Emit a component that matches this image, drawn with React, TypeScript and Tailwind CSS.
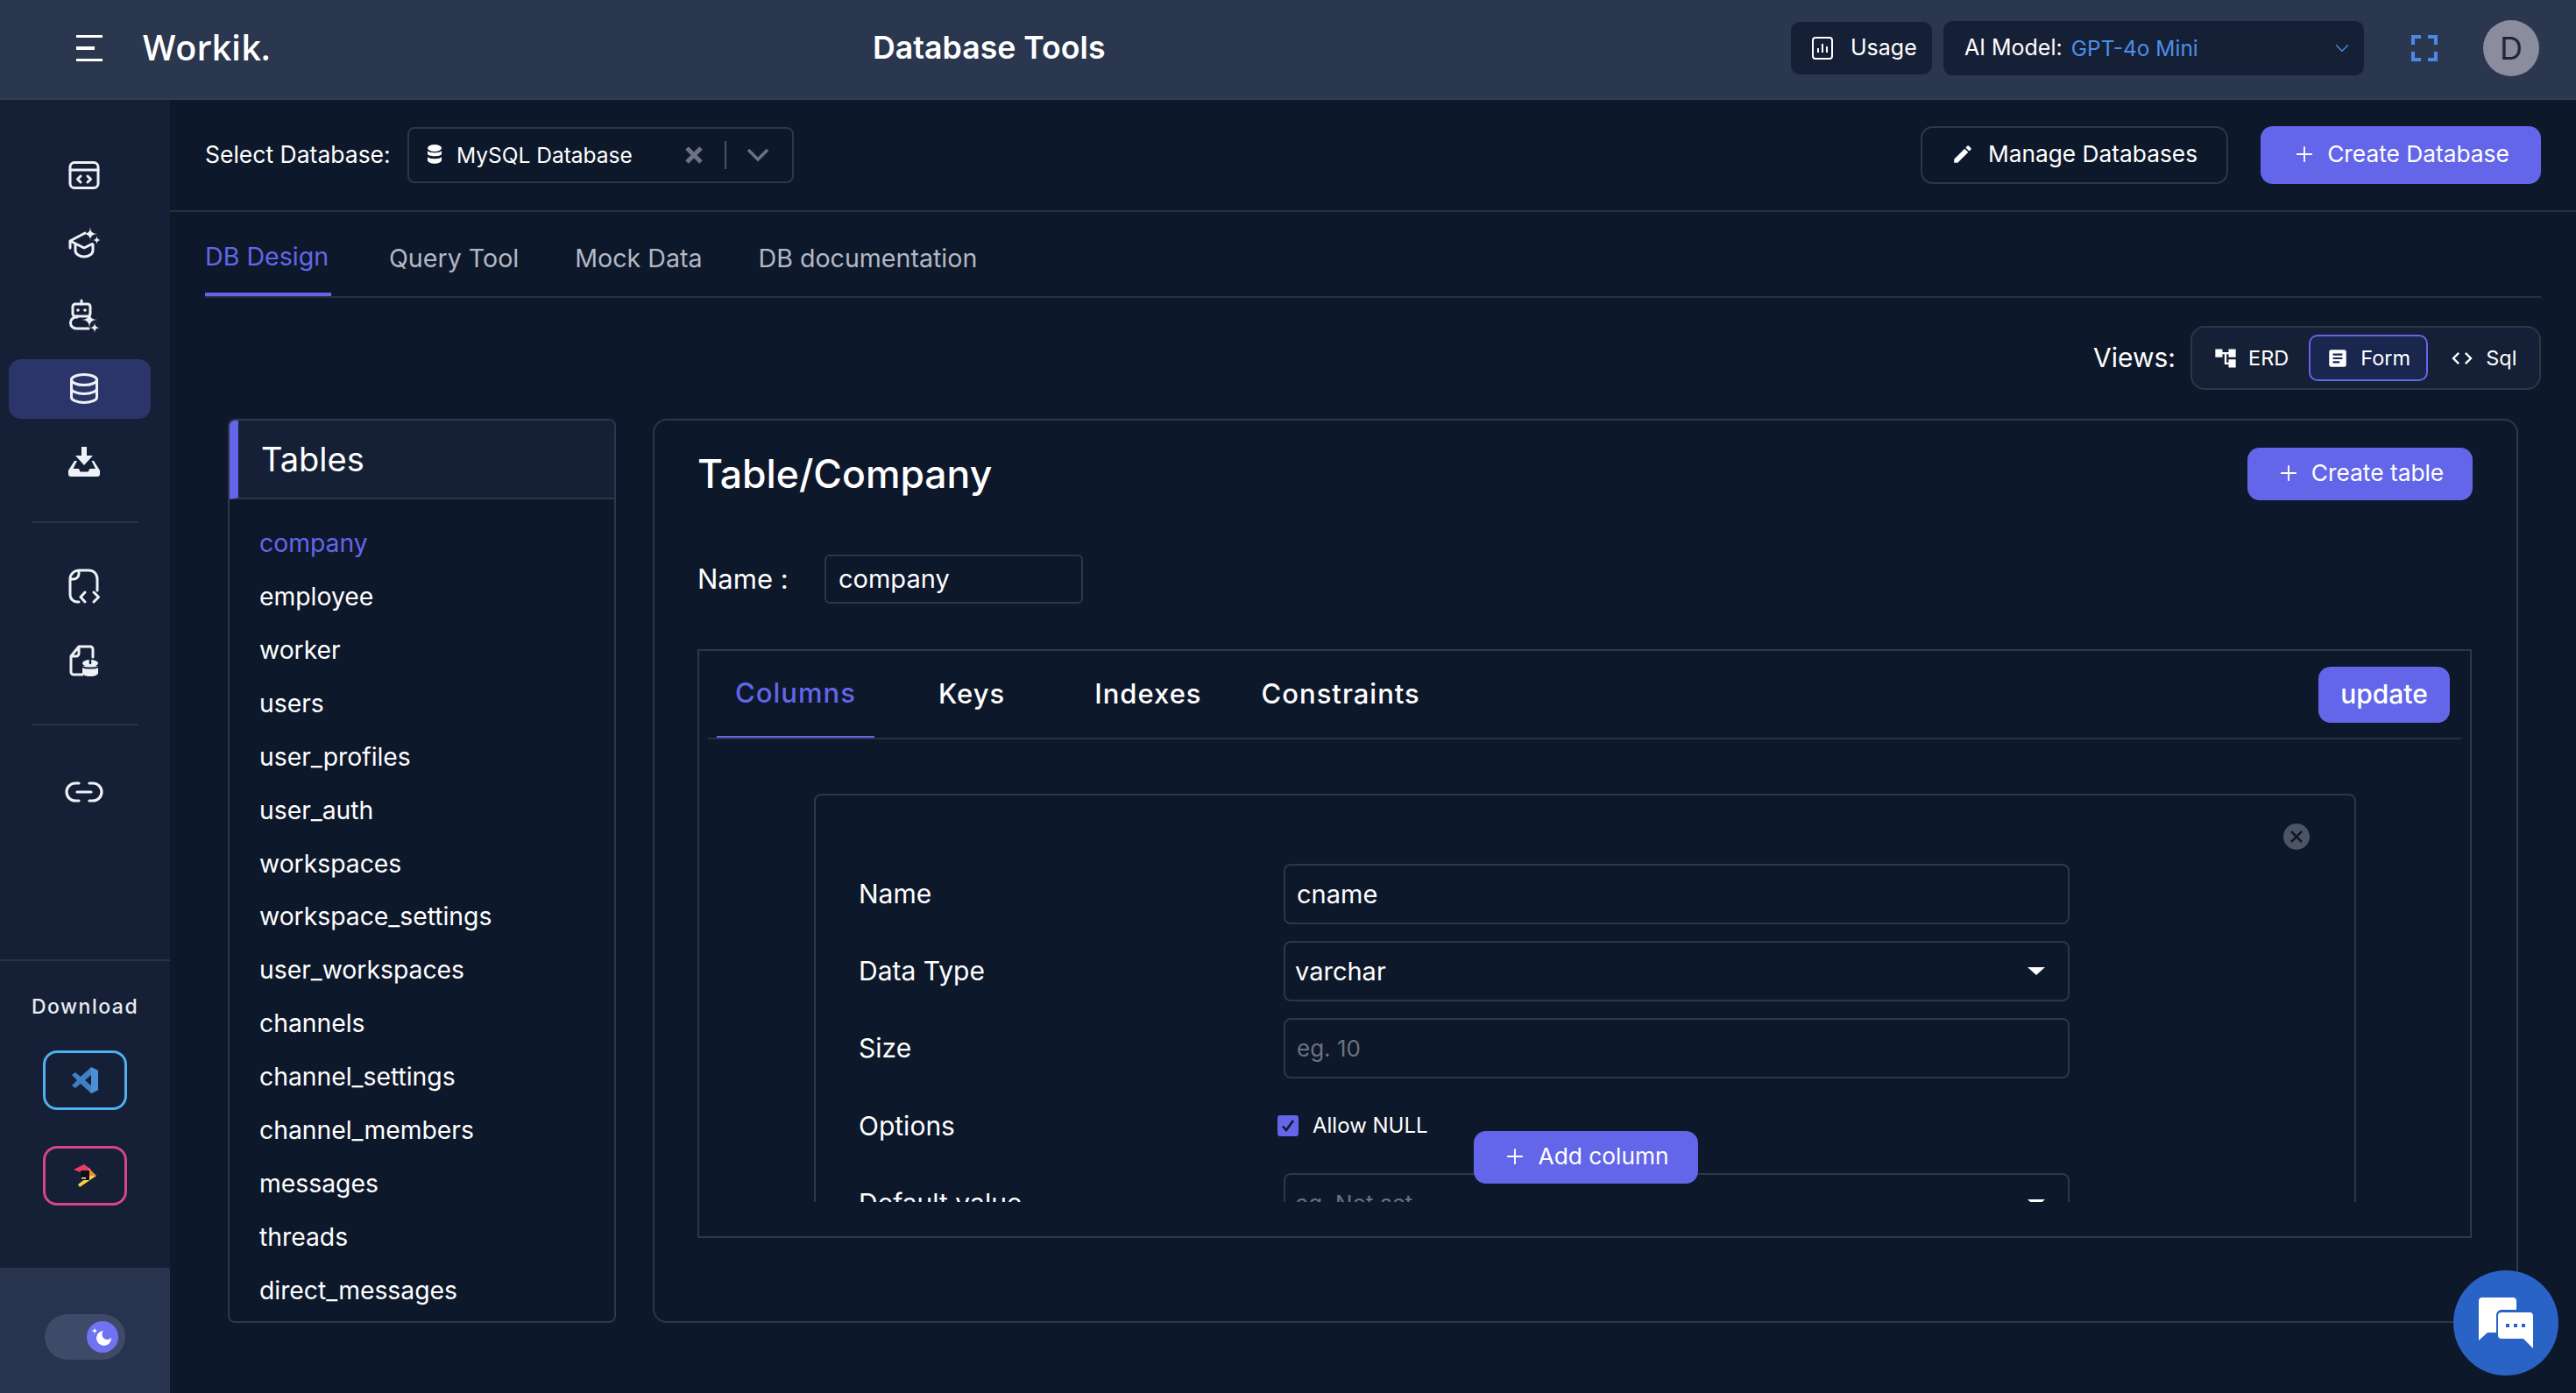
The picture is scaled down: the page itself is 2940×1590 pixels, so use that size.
import React from 'react';
import { ChevronDown, Link2, Plus } from 'lucide-react';

const tables = [
  'company',
  'employee',
  'worker',
  'users',
  'user_profiles',
  'user_auth',
  'workspaces',
  'workspace_settings',
  'user_workspaces',
  'channels',
  'channel_settings',
  'channel_members',
  'messages',
  'threads',
  'direct_messages',
];

const star = (cx: number, cy: number, r: number) =>
  `M${cx} ${cy - r}Q${cx} ${cy} ${cx + r} ${cy}Q${cx} ${cy} ${cx} ${cy + r}Q${cx} ${cy} ${cx - r} ${cy}Q${cx} ${cy} ${cx} ${cy - r}Z`;

const NavSvg = ({ children }: { children: React.ReactNode }) => (
  <svg width="40" height="40" viewBox="0 0 40 40" fill="none" stroke="#eef1f6" strokeWidth="3" strokeLinecap="round" strokeLinejoin="round">
    {children}
  </svg>
);

function NavItem({ className, children }: { className: string; children: React.ReactNode }) {
  return (
    <div className={`ml-[10px] w-[162px] h-[68px] pl-[66px] flex items-center ${className}`}>{children}</div>
  );
}

const Sidebar = () => (
  <aside className="w-[194px] shrink-0 flex flex-col bg-[#152036]">
    <div className="pt-[52px]">
      <NavItem className="">
        <NavSvg>
          <rect x="4" y="5.500" width="32" height="29" rx="5" />
          <path d="M4 14h32M16 21l-3.500 3.500L16 28M24 21l3.500 3.500L24 28" />
        </NavSvg>
      </NavItem>
      <NavItem className="mt-[10px]">
        <NavSvg>
          <path d="M4 25v-8l17-9M4 17l16 8 9-4.500M10 21v7c0 4 5 7 10 7s10-3 10-7v-7" />
          <path d={star(27, 9, 8)} fill="#eef1f6" stroke="none" />
          <path d={star(34.500, 16, 5)} fill="#eef1f6" stroke="none" />
        </NavSvg>
      </NavItem>
      <NavItem className="mt-[14px]">
        <NavSvg>
          <rect x="7" y="7" width="20" height="14" rx="3" />
          <path d="M17 3v4M12 21v1h-1a6.500 6.500 0 0 0 0 13h14" />
          <circle cx="13" cy="14" r="1.800" fill="#eef1f6" stroke="none" />
          <circle cx="21" cy="14" r="1.800" fill="#eef1f6" stroke="none" />
          <path d={star(26, 25, 9)} fill="#eef1f6" stroke="none" />
          <path d={star(32, 34, 6)} fill="#eef1f6" stroke="none" />
        </NavSvg>
      </NavItem>
      <NavItem className="mt-[16px] bg-[#2c3569] rounded-[14px]">
        <NavSvg>
          <ellipse cx="20" cy="9.500" rx="14.500" ry="6" />
          <path d="M5.500 9.500v20c0 3.300 6.500 6 14.500 6s14.500-2.700 14.500-6v-20M5.500 19.500c0 3.300 6.500 6 14.500 6s14.500-2.700 14.500-6" />
        </NavSvg>
      </NavItem>
      <NavItem className="mt-[15px]">
        <svg width="40" height="40" viewBox="0 0 40 40" fill="#eef1f6">
          <path d="M17 3h6v10h7L20 24 10 13h7z" />
          <path d="M9 19 2 30v4a3 3 0 0 0 3 3h30a3 3 0 0 0 3-3v-4l-7-11h-2.500l4.500 9h-6.500l-2 3.500h-9L14 28H7.500L12 19z" />
        </svg>
      </NavItem>
    </div>
    <div className="mx-[36px] w-[122px] h-[2px] mt-[34px] bg-[#2a3245]" />
    <div className="pl-[76px] pt-[52px]">
      <NavSvg>
        <path d="M4 12v18a8 8 0 0 0 8 8h2M35 25V12C35 6 31 2 25 2H14C9 2 4 6 4 12M14 2v4a6 6 0 0 1-6 6H4" />
        <path d="M21 27l-5 5.500 5 5.500M31 27l5.500 5.500L31 38" />
      </NavSvg>
      <div className="mt-[46px]">
        <NavSvg>
          <path d="M18 35H8a3 3 0 0 1-3-3V14L14 3h13a3 3 0 0 1 3 3v9M14 3v8a3 3 0 0 1-3 3H5" />
          <ellipse cx="27" cy="22" rx="9" ry="4" fill="#eef1f6" stroke="none" />
          <path d="M18 25h18v8c0 2.500-4 4-9 4s-9-1.500-9-4z" fill="#eef1f6" stroke="none" />
          <path d="M18 26c2 2 16 2 18 0" stroke="#152036" strokeWidth="2" />
          <path d="M27 19v3" stroke="#152036" strokeWidth="2.500" />
        </NavSvg>
      </div>
    </div>
    <div className="mx-[36px] w-[122px] h-[2px] mt-[51px] bg-[#2a3245]" />
    <div className="pl-[72px] pt-[52px]">
      <Link2 size={48} strokeWidth={1.6} color="#eef1f6" />
    </div>
    <div className="h-[2px] mt-[167px] bg-[#2a3245]" />
    <div className="flex-1 flex flex-col items-center">
      <div className="mt-[38px] text-[23px] font-medium tracking-[1.5px] text-[#e8ebf0] leading-[28px]">Download</div>
      <div className="mt-[36px] w-[96px] h-[68px] rounded-[16px] border-[3px] border-[#4fb0ee] flex items-center justify-center">
        <svg width="32" height="32" viewBox="0 0 32 32">
          <path d="M23 1 31 5v22l-8 4-12-11-6 5-4-3 6-6-6-6 4-3 6 5z" fill="#3f7fc4" />
          <path d="M23 1 31 5v22l-8 4z" fill="#4a90d9" />
          <path d="M23 10l-7 6 7 6z" fill="#152036" />
        </svg>
      </div>
      <div className="mt-[41px] w-[96px] h-[68px] rounded-[16px] border-[3px] border-[#d9458c] flex items-center justify-center">
        <svg width="30" height="30" viewBox="0 0 30 30">
          <path d="M2 8 14 2l8 6-10 4z" fill="#ea3d6d" />
          <path d="M19 6 28 15l-9 1z" fill="#f58a3c" />
          <path d="M28 15 9 28l-2-3 13-10z" fill="#fbd03a" />
          <rect x="10" y="9" width="10" height="11" fill="#111" />
          <rect x="11" y="17" width="5" height="1.500" fill="#eee" />
        </svg>
      </div>
    </div>
    <div className="h-[143px] bg-[#28344d] flex items-start justify-center pt-[53px]">
      <div className="w-[92px] h-[52px] rounded-full bg-[#3f4a68] flex items-center justify-end pr-[8px]">
        <div className="w-[36px] h-[36px] rounded-full bg-[#6f73f0] flex items-center justify-center">
          <svg width="32" height="32" viewBox="0 0 32 32" fill="white">
            <path d="M17 9a8.500 8.500 0 1 0 9 8 5.500 5.500 0 0 1-9-8z" />
            <path d={star(7, 9, 4)} />
          </svg>
        </div>
      </div>
    </div>
  </aside>
);

const PrimaryButton = ({ label, className }: { label: string; className: string }) => (
  <button className={`flex items-center justify-center pb-[2px] bg-[#6366e8] text-white rounded-[14px] text-[26.300px] ${className}`}>
    <Plus size={28} strokeWidth={1.6} className="mr-[12px]" />
    {label}
  </button>
);

const Field = ({ value, placeholder, arrow }: { value?: string; placeholder?: string; arrow?: boolean }) => (
  <div className="h-[69px] w-[897px] border-2 border-[#2f3648] rounded-[8px] flex items-center pl-[13px] pr-[26px] justify-between">
    <span className={`${value ? 'text-white text-[29px]' : 'text-[#6b7280] text-[26px]'} ${arrow ? '-ml-[2px]' : ''}`}>{value || placeholder}</span>
    {arrow && <span className="w-0 h-0 border-x-[10px] border-x-transparent border-t-[9px] border-t-white" />}
  </div>
);

const Label = ({ text }: { text: string }) => <div className="text-[30px] w-[485px] shrink-0">{text}</div>;

const TopBar = () => (
  <header className="h-[114px] shrink-0 flex items-center pb-[2px] bg-[#2a374f] border-b-2 border-[#333c50]">
    <div className="ml-[87px] w-[30px] flex flex-col gap-[10px]">
      <span className="h-[3.500px] w-[30px] bg-white" />
      <span className="h-[3.500px] w-[21px] bg-white" />
      <span className="h-[3.500px] w-[30px] bg-white" />
    </div>
    <div className="ml-[46px] w-[833px] text-[39.500px] font-semibold font-['Open_Sans',sans-serif]">Workik.</div>
    <div className="text-[35.700px] font-semibold">Database Tools</div>
    <div className="ml-auto mr-[42px] flex items-center">
      <button className="h-[60px] w-[161px] pl-[24px] bg-[#152036] rounded-[10px] flex items-center gap-[20px] text-[25px]">
        <svg width="24" height="26" viewBox="0 0 24 26" fill="none" stroke="white" strokeWidth="2">
          <rect x="1" y="1" width="22" height="24" rx="3" />
          <path d="M7 18v-5M12 18V8M17 18v-7" />
        </svg>
        Usage
      </button>
      <div className="ml-[13px] w-[480px] h-[62px] bg-[#152036] rounded-[10px] flex items-center pl-[24px] pr-[12px] text-[25px]">
        <span>AI Model:</span>
        <span className="ml-[10px] text-[24.500px] text-[#4d8fe8]">GPT-4o Mini</span>
        <ChevronDown size={26} strokeWidth={1.2} className="ml-auto text-[#4d8fe8]" />
      </div>
      <svg className="ml-[54px]" width="30" height="30" viewBox="0 0 30 30" fill="none" stroke="#4a8ae6" strokeWidth="4">
        <path d="M2 11V2h9M19 2h9v9M2 19v9h9M19 28h9v-9" />
      </svg>
      <div className="ml-[52px] w-[64px] h-[64px] rounded-full bg-[#8c8c9f] flex items-center justify-center text-[36px] text-[#1d2638]">D</div>
    </div>
  </header>
);

const DbToolbar = () => (
  <div className="h-[128px] shrink-0 px-[40px] flex items-center border-b-2 border-[#2a3040]">
    <span className="w-[231px] text-[26.500px]">Select Database:</span>
    <div className="w-[441px] h-[64px] border-2 border-[#2f3648] rounded-[8px] flex items-center pl-[20px] text-[24.500px]">
      <svg width="18" height="26" viewBox="0 0 18 26" fill="white">
        <ellipse cx="9" cy="5" rx="8" ry="4" />
        <path d="M1 8c1 3 15 3 16 0v4c-1 3-15 3-16 0zM1 15c1 3 15 3 16 0v4c-1 5-15 5-16 0z" />
      </svg>
      <span className="ml-[16px] w-[261px]">MySQL Database</span>
      <svg width="20" height="20" viewBox="0 0 20 20" stroke="#6b7280" strokeWidth="5">
        <path d="M2 2l16 16M18 2 2 18" />
      </svg>
      <span className="ml-[25px] w-[2px] h-[32px] bg-[#4b5563]" />
      <svg className="ml-[23px]" width="26" height="16" viewBox="0 0 26 16" fill="none" stroke="#6b7280" strokeWidth="3.500">
        <path d="M2 2l11 11L24 2" />
      </svg>
    </div>
    <button className="ml-auto h-[66px] w-[351px] pb-[2px] border-2 border-[#2f3648] rounded-[14px] flex items-center justify-center gap-[16px] text-[26.300px]">
      <svg width="26" height="26" viewBox="0 0 24 24" fill="white">
        <path d="M3 17.250V21h3.750L17.810 9.940l-3.750-3.750L3 17.250zM20.710 7.040c.39-.39.39-1.020 0-1.410l-2.340-2.340c-.39-.39-1.020-.39-1.410 0l-1.830 1.830 3.750 3.750 1.830-1.830z" />
      </svg>
      Manage Databases
    </button>
    <PrimaryButton label="Create Database" className="ml-[37px] w-[320px] h-[66px]" />
  </div>
);

const ViewSwitch = () => (
  <div className="mt-[32px] flex justify-end items-center">
    <span className="text-[30px] mr-[17px]">Views:</span>
    <div className="w-[400px] h-[73px] border-2 border-[#2f3648] rounded-[16px] bg-[#152036] flex items-center pl-[24px] text-[23.500px]">
      <svg width="28" height="28" viewBox="0 0 24 24" fill="white">
        <path d="M22 11V3h-7v3H9V3H2v8h7V8h2v10h4v3h7v-8h-7v3h-2V8h2v3z" />
      </svg>
      <span className="ml-[12px]">ERD</span>
      <div className="ml-[23px] w-[136px] h-[53px] border-2 border-[#6366e8] bg-[#19264d] rounded-[10px] flex items-center justify-center gap-[13px]">
        <svg width="26" height="26" viewBox="0 0 24 24" fill="white">
          <path d="M19 3H5c-1.100 0-2 .9-2 2v14c0 1.100.9 2 2 2h14c1.100 0 2-.9 2-2V5c0-1.100-.9-2-2-2zm-5 14H7v-2h7v2zm3-4H7v-2h10v2zm0-4H7V7h10v2z" />
        </svg>
        Form
      </div>
      <svg className="ml-[25px]" width="28" height="28" viewBox="0 0 24 24" fill="white">
        <path d="M9.400 16.600 4.800 12l4.600-4.600L8 6l-6 6 6 6 1.400-1.400zm5.200 0 4.600-4.600-4.600-4.600L16 6l6 6-6 6-1.400-1.400z" />
      </svg>
      <span className="ml-[13px]">Sql</span>
    </div>
  </div>
);

const TablesPanel = () => (
  <div className="w-[443px] h-[1032px] shrink-0 border-2 border-[#2f3648] rounded-[8px] overflow-hidden">
    <div className="h-[90px] bg-[#152036] border-b-2 border-[#2f3648] border-l-[10px] border-l-[#6366e8] flex items-center pl-[26px] text-[38px]">
      Tables
    </div>
    <div className="pt-[20px] pl-[34px]">
      {tables.map((t) => (
        <div key={t} className={`h-[60.900px] flex items-center text-[28.300px] ${t === 'company' ? 'text-[#6366e8]' : ''}`}>
          {t}
        </div>
      ))}
    </div>
  </div>
);

const ColumnsBox = () => (
  <div className="mt-[52px] w-[2025px] h-[672px] border-2 border-[#2f3648] relative">
    <div className="mx-[10px] h-[101px] border-b-2 border-[#2a3040] flex items-center text-[31px] font-medium tracking-[1px]">
      <div className="ml-[10px] w-[180px] h-full flex items-center justify-center border-b-2 border-[#6366e8] text-[#6366e8]">Columns</div>
      <div className="ml-[73px]">Keys</div>
      <div className="ml-[102px]">Indexes</div>
      <div className="ml-[68px]">Constraints</div>
      <button className="ml-auto mr-[13px] w-[150px] h-[64px] bg-[#6366e8] rounded-[14px] text-[30px] tracking-normal">update</button>
    </div>
    <div className="h-[528px] overflow-hidden pt-[62px] pl-[131px]">
      <div className="w-[1760px] h-[700px] border-2 border-[#2f3648] rounded-[8px] relative pl-[49px] pt-[78px]">
        <div className="absolute top-[32px] right-[51px] w-[30px] h-[30px] rounded-full bg-[#4b5563] flex items-center justify-center">
          <svg width="16" height="16" viewBox="0 0 16 16" stroke="#0e182b" strokeWidth="2.500">
            <path d="M2 2l12 12M14 2 2 14" />
          </svg>
        </div>
        <div className="flex flex-col gap-[19px]">
          <div className="flex items-center">
            <Label text="Name" />
            <Field value="cname" />
          </div>
          <div className="flex items-center">
            <Label text="Data Type" />
            <Field value="varchar" arrow />
          </div>
          <div className="flex items-center">
            <Label text="Size" />
            <Field placeholder="eg. 10" />
          </div>
          <div className="flex items-center h-[70px]">
            <Label text="Options" />
            <div className="-ml-[7px] w-[24px] h-[24px] rounded-[3px] bg-[#6366e8] flex items-center justify-center">
              <svg width="18" height="18" viewBox="0 0 18 18" fill="none" stroke="#0e182b" strokeWidth="2.500">
                <path d="M3 9.500l4 4.500 8-11" />
              </svg>
            </div>
            <span className="ml-[16px] text-[24px]">Allow NULL</span>
          </div>
          <div className="flex items-center">
            <Label text="Default value" />
            <Field placeholder="eg. Not set" arrow />
          </div>
        </div>
      </div>
    </div>
    <PrimaryButton label="Add column" className="absolute left-[884px] top-[548px] w-[256px] h-[60px]" />
  </div>
);

export default function App() {
  return (
    <div className="w-[2940px] h-[1590px] overflow-hidden relative flex flex-col bg-[#0e182b] text-white font-['Inter','Liberation_Sans',sans-serif]">
      <TopBar />
      <div className="flex-1 flex min-h-0">
        <Sidebar />
        <main className="flex-1 min-w-0">
          <DbToolbar />
          <div className="px-[40px]">
            <div className="h-[98px] border-b-2 border-[#2a3040] flex items-center gap-[64px] text-[28.600px] text-[#b3b8c2]">
              <div className="h-full w-[144px] mr-[2px] flex items-center pt-[10px] border-b-4 border-[#6366e8] text-[#6366e8]">DB Design</div>
              <div className="pt-[10px]">Query Tool</div>
              <div className="pt-[10px]">Mock Data</div>
              <div className="pt-[10px]">DB documentation</div>
            </div>
            <ViewSwitch />
            <div className="mt-[33px] ml-[26px] flex gap-[42px]">
              <TablesPanel />
              <div className="w-[2129px] h-[1032px] border-2 border-[#2f3648] rounded-[16px] pl-[49px] pt-[31px]">
                <div className="flex items-center justify-between pr-[50px] h-[60px]">
                  <div className="text-[44.500px] font-medium">Table/Company</div>
                  <PrimaryButton label="Create table" className="w-[257px] h-[60px]" />
                </div>
                <div className="mt-[62px] flex items-center">
                  <span className="text-[31px] w-[145px]">Name :</span>
                  <div className="w-[295px] h-[56px] border-2 border-[#2f3648] rounded-[6px] flex items-center pl-[14px] text-[29px]">company</div>
                </div>
                <ColumnsBox />
              </div>
            </div>
          </div>
        </main>
      </div>
      <div className="absolute left-[2800px] top-[1450px] w-[120px] h-[120px] rounded-full bg-[#2a63c6] flex items-center justify-center">
        <svg width="62" height="58" viewBox="0 0 62 58" fill="white">
          <path d="M4 0h35a4 4 0 0 1 4 4v10H26a6 6 0 0 0-6 6v20H10l-10 9V4a4 4 0 0 1 4-4z" />
          <path d="M26 17h32a4 4 0 0 1 4 4v37l-11-11H26a4 4 0 0 1-4-4V21a4 4 0 0 1 4-4z" />
          <rect x="31" y="30" width="4" height="4" fill="#2a63c6" />
          <rect x="40" y="30" width="4" height="4" fill="#2a63c6" />
          <rect x="49" y="30" width="4" height="4" fill="#2a63c6" />
        </svg>
      </div>
    </div>
  );
}
